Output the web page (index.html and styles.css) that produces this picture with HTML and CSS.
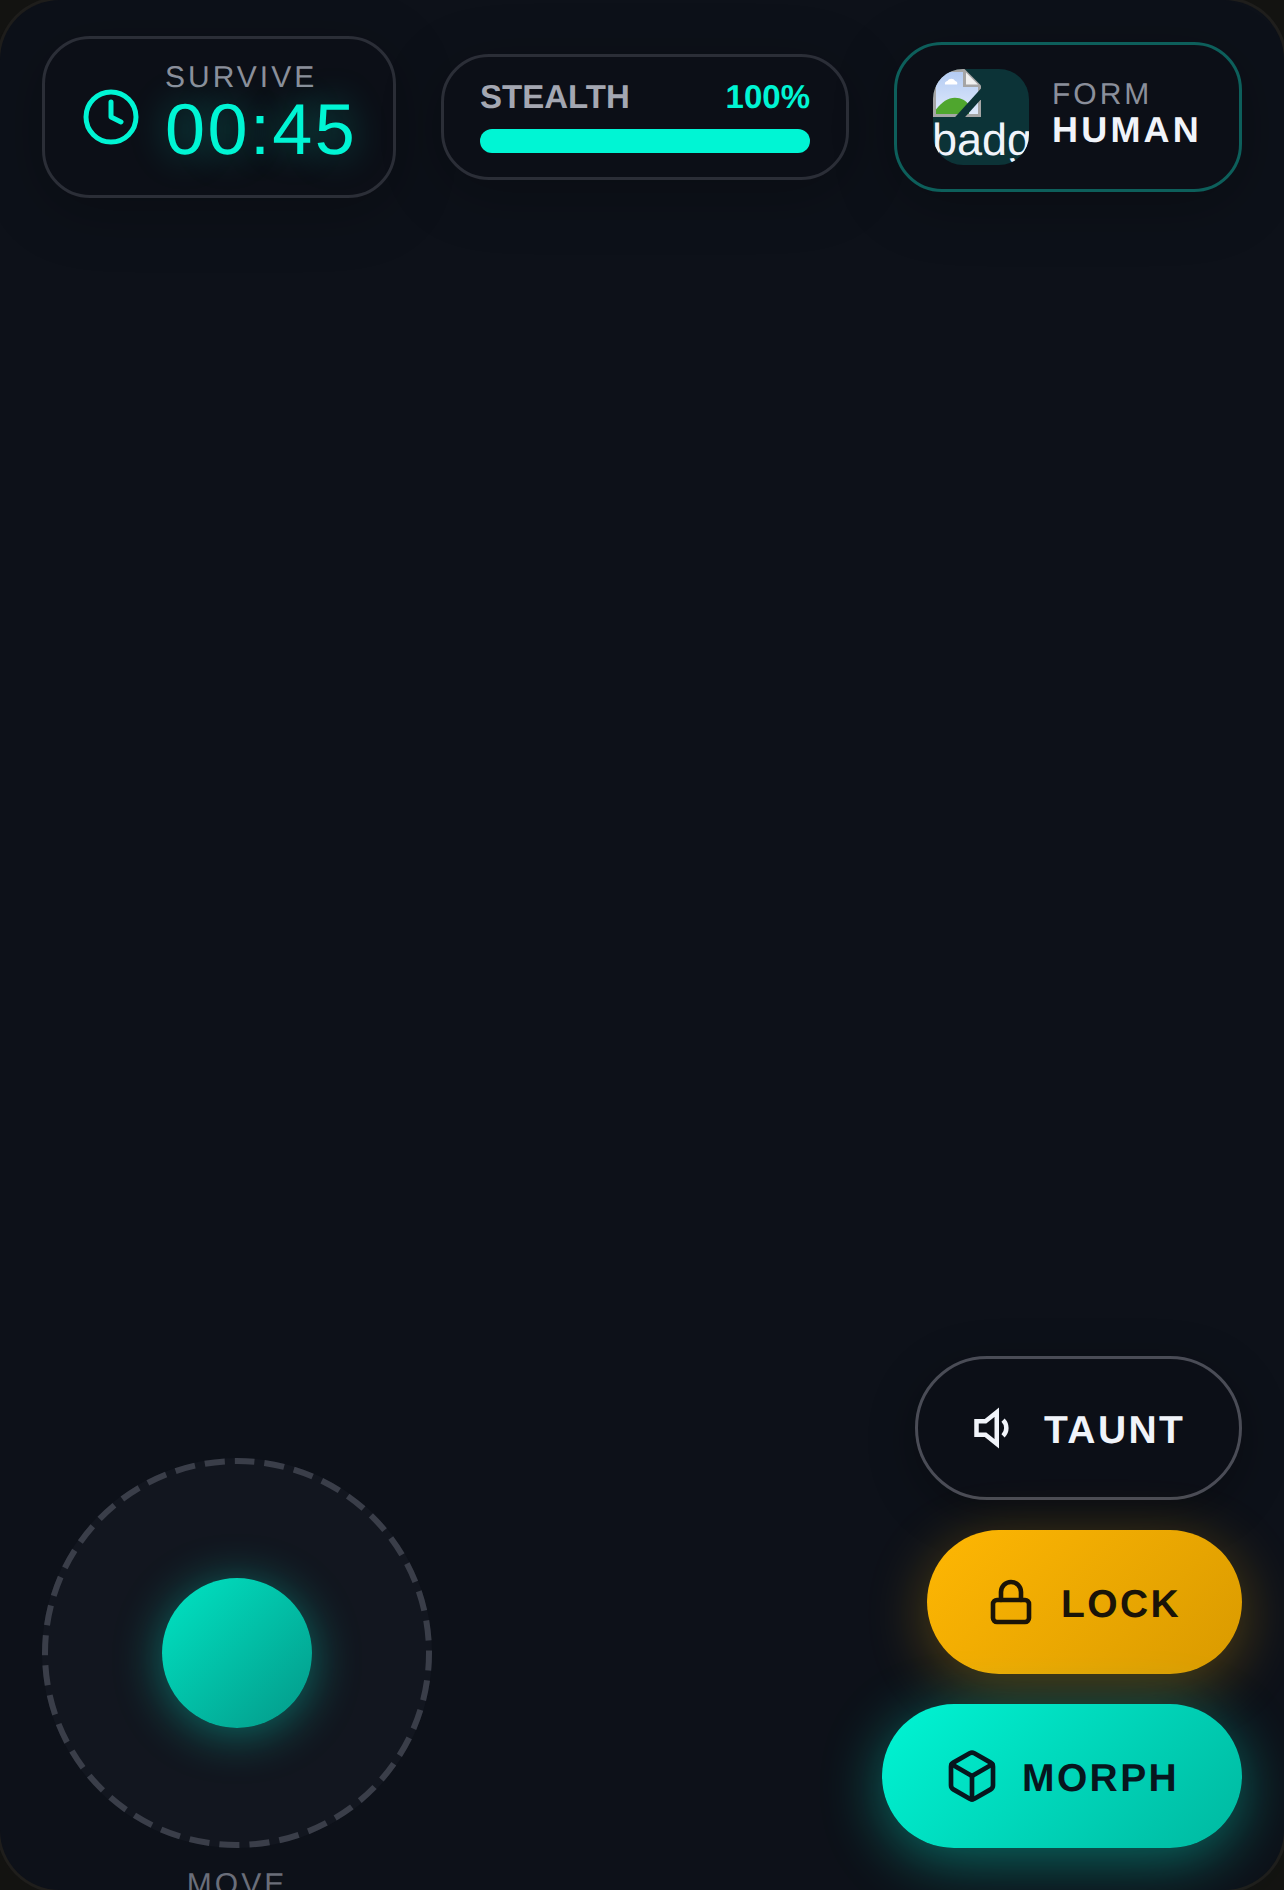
FILE: index.html
```html
<!DOCTYPE html>
<html lang="en">
<head>
  <meta charset="UTF-8" />
  <meta name="viewport" content="width=device-width, initial-scale=1.0"/>
  <title>Morph Hunt HUD</title>
  <link rel="stylesheet" href="styles.css">
</head>
<body>
  <div class="screen">
    <div class="top-bar">
      <div class="card timer">
        <svg class="icon-clock" viewBox="0 0 24 24"><circle cx="12" cy="12" r="10"/><path d="M12 6v6l4 2"/></svg>
        <div class="timer-text">
          <div class="small-label survive-label">SURVIVE</div>
          <div class="time">00:45</div>
        </div>
      </div>

      <div class="card stealth">
        <div class="stealth-row">
          <span class="stealth-name">STEALTH</span>
          <span class="stealth-value">100%</span>
        </div>
        <div class="bar"><div class="bar-fill"></div></div>
      </div>

      <div class="card form-card">
        <div class="badge">
          <svg class="broken-img" viewBox="0 0 16 16">
            <defs>
              <linearGradient id="skyFill" x1="0" y1="0" x2="0" y2="1">
                <stop offset="0" stop-color="#b4ccf3"/>
                <stop offset="1" stop-color="#dfe9fb"/>
              </linearGradient>
            </defs>
            <path class="bi-frame" d="M0 0H10.5L16 5.5V16H0z"/>
            <path fill="url(#skyFill)" d="M1 1H10V6H15V15H1z"/>
            <path class="bi-fold" d="M11 1.2 15 5.2H11z"/>
            <path class="bi-cloud" d="M4 5.2a1 1 0 0 1 .8-1.2 1.5 1.5 0 0 1 2.6 0 .8.8 0 0 1 .6 1.2z"/>
            <path class="bi-hill" d="M1 15V13.5C3 11 5 9.6 7.3 9.6 9.5 9.6 11 10.6 12 12V15z"/>
            <path class="bi-cut" d="M16 6.5 7.4 16H10.7L16 10.1z"/>
          </svg>
          <span class="badge-alt">badge</span>
        </div>
        <div class="form-text">
          <div class="small-label form-label">FORM</div>
          <div class="form-name">HUMAN</div>
        </div>
      </div>
    </div>

    <div class="controls">
      <div class="stick-col">
        <div class="stick">
          <svg class="stick-ring" viewBox="0 0 390 390"><circle cx="195" cy="195" r="192" transform="rotate(-90 195 195)"/></svg>
          <div class="knob"></div>
        </div>
        <div class="small-label move-label">MOVE</div>
      </div>

      <div class="actions">
        <button class="btn taunt">
          <svg viewBox="0 0 24 24"><path d="M11 5 6 9H2v6h4l5 4z"/><path d="M13.8 8.46a5 5 0 0 1 0 7.07"/></svg>
          <span class="btn-text">TAUNT</span>
        </button>
        <button class="btn lock">
          <svg viewBox="0 0 24 24"><rect x="3" y="11" width="18" height="11" rx="2"/><path d="M7 11V7a5 5 0 0 1 10 0v4"/></svg>
          <span class="btn-text">LOCK</span>
        </button>
        <button class="btn morph">
          <svg viewBox="0 0 24 24"><path d="M21 16V8a2 2 0 0 0-1-1.73l-7-4a2 2 0 0 0-2 0l-7 4A2 2 0 0 0 3 8v8a2 2 0 0 0 1 1.73l7 4a2 2 0 0 0 2 0l7-4A2 2 0 0 0 21 16z"/><path d="M3.27 6.96 12 12.01l8.73-5.05"/><path d="M12 22.08V12"/></svg>
          <span class="btn-text">MORPH</span>
        </button>
      </div>
    </div>
  </div>
</body>
</html>
```

FILE: styles.css
```css
* {
  box-sizing: border-box;
}

html, body {
  margin: 0;
  height: 100%;
  overflow: hidden;
  background-color: #131311;
}

body {
  font-family: "Liberation Sans", Arial, sans-serif;
  text-rendering: geometricPrecision;
}

.screen {
  width: 1284px;
  height: 1890px;
  display: flex;
  flex-direction: column;
  justify-content: space-between;
  background-color: #0d1119;
  border-radius: 60px;
  box-shadow: 0 0 0 3px #1f1e1c;
}

.top-bar {
  display: flex;
  justify-content: space-between;
  align-items: center;
  padding: 36px 42px 0;
}

.card {
  background-color: #0c0f17;
  border: 3px solid #2b2e37;
  border-radius: 48px;
  box-shadow: 0 12px 60px rgba(0, 0, 0, 0.25);
}

.small-label {
  font-size: 30px;
  letter-spacing: 3px;
  color: #8b8f9b;
}

/* timer */
.timer {
  display: flex;
  align-items: center;
  gap: 24px;
  width: 354px;
  height: 162px;
  padding: 0 36px;
}

.icon-clock {
  width: 60px;
  height: 60px;
  flex-shrink: 0;
  fill: none;
  stroke: #00f5d4;
  stroke-width: 2;
  stroke-linecap: round;
  stroke-linejoin: round;
}

.survive-label {
  line-height: 33px;
}

.time {
  margin-bottom: 8px;
  font-size: 72px;
  line-height: 72px;
  letter-spacing: 2.4px;
  color: #00f5d4;
  text-shadow: 0 0 36px rgba(0, 245, 212, 0.4);
}

/* stealth */
.stealth {
  width: 408px;
  height: 126px;
  padding: 24px 36px 0;
}

.stealth-row {
  display: flex;
  justify-content: space-between;
  height: 48px;
  font-size: 33px;
  line-height: 31px;
  font-weight: bold;
}

.stealth-name {
  color: #a4a7b2;
}

.stealth-value {
  color: #00f5d4;
}

.bar {
  height: 24px;
  border-radius: 12px;
  overflow: hidden;
  background-color: #22252e;
}

.bar-fill {
  height: 100%;
  width: 100%;
  background-color: #00f5d4;
}

/* form */
.form-card {
  display: flex;
  align-items: center;
  gap: 23px;
  width: 348px;
  height: 150px;
  padding: 0 36px;
  border-color: #0d5f5b;
}

.badge {
  width: 96px;
  height: 96px;
  flex-shrink: 0;
  overflow: hidden;
  border-radius: 30px;
  background-color: #0c3337;
  color: #f1f4fa;
  font-size: 45px;
  line-height: 46px;
}

.broken-img {
  display: block;
  width: 48px;
  height: 48px;
}

.bi-frame { fill: #a5a5a5; }
.bi-fold { fill: #f0f0f0; }
.bi-cloud { fill: #ffffff; }
.bi-hill { fill: #4fa62e; }
.bi-cut { fill: #0c3337; }

.badge-alt {
  display: block;
  margin-left: -1px;
  white-space: nowrap;
}

.form-text {
  display: flex;
  flex-direction: column;
  padding-bottom: 8px;
}

.form-label {
  line-height: 34px;
}

.form-name {
  font-size: 36px;
  line-height: 36px;
  font-weight: bold;
  letter-spacing: 3.2px;
  color: #f1f4fa;
}

/* bottom */
.controls {
  display: flex;
  justify-content: space-between;
  align-items: flex-end;
  padding: 0 42px 42px;
}

.stick-col {
  display: flex;
  flex-direction: column;
  align-items: center;
  gap: 17px;
  margin-bottom: -56px;
}

.stick {
  width: 390px;
  height: 390px;
  display: grid;
  place-items: center;
  border-radius: 50%;
  background-color: #12161f;
}

.stick > * {
  grid-area: 1 / 1;
}

.stick-ring {
  width: 390px;
  height: 390px;
  fill: none;
  stroke: #3a3e49;
  stroke-width: 6;
  stroke-dasharray: 20.1 10.06;
  stroke-dashoffset: 2.7;
}

.knob {
  width: 150px;
  height: 150px;
  border-radius: 50%;
  background: linear-gradient(135deg, #00e5c4, #049888);
  box-shadow: 0 6px 48px rgba(0, 245, 212, 0.4);
}

.move-label {
  line-height: 39px;
  color: #6a6e7a;
}

.actions {
  display: flex;
  flex-direction: column;
  align-items: flex-end;
  gap: 30px;
}

.btn {
  display: flex;
  align-items: center;
  height: 144px;
  border: none;
  border-radius: 72px;
  font-family: inherit;
  font-size: 39px;
  font-weight: bold;
  letter-spacing: 2.4px;
  text-rendering: geometricPrecision;
}

.btn svg {
  flex-shrink: 0;
  fill: none;
  stroke: currentColor;
  stroke-width: 2;
  stroke-linecap: round;
  stroke-linejoin: round;
}

.btn-text {
  padding-top: 5px;
}

.taunt {
  gap: 18px;
  padding: 0 54px;
  width: 327px;
  color: #f1f4fa;
  background-color: #0c0f17;
  border: 3px solid #4a4c56;
  box-shadow: 0 12px 48px rgba(0, 0, 0, 0.3);
}

.taunt svg {
  width: 54px;
  height: 54px;
  stroke-linecap: butt;
  stroke-linejoin: miter;
}

.lock {
  gap: 26px;
  padding: 0 60px;
  width: 315px;
  color: #1a1408;
  background: linear-gradient(135deg, #ffb703, #d99a00);
  box-shadow: 0 12px 60px rgba(255, 183, 3, 0.3);
}

.lock svg {
  width: 48px;
  height: 48px;
  stroke-width: 2.3;
}

.morph {
  gap: 22px;
  padding: 0 60px 0 62px;
  width: 360px;
  color: #07161e;
  background: linear-gradient(135deg, #00f5d4, #00b8a0);
  box-shadow: 0 12px 60px rgba(0, 245, 212, 0.4);
}

.morph svg {
  width: 56px;
  height: 56px;
}
```
